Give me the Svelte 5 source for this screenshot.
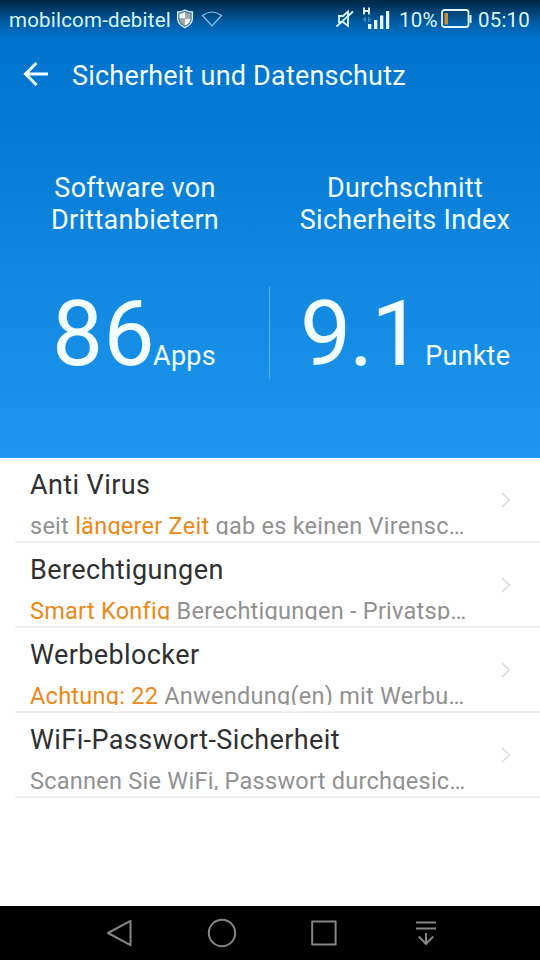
<script>
  const stats = [
    { label: ['Software von', 'Drittanbietern'], value: '86', unit: 'Apps', side: 'left' },
    { label: ['Durchschnitt', 'Sicherheits Index'], value: '9.1', unit: 'Punkte', side: 'right' }
  ];
  const items = [
    { title: 'Anti Virus', before: 'seit ', accent: 'längerer Zeit', after: ' gab es keinen Virensc…' },
    { title: 'Berechtigungen', before: '', accent: 'Smart Konfig', after: ' Berechtigungen - Privatsp…' },
    { title: 'Werbeblocker', before: '', accent: 'Achtung: 22', after: ' Anwendung(en) mit Werbu…' },
    { title: 'WiFi-Passwort-Sicherheit', before: '', accent: '', after: 'Scannen Sie WiFi, Passwort durchgesic…' }
  ];
</script>

<div class="screen">
  <header class="hero">
    <div class="status">
      <span class="carrier">mobilcom-debitel</span>
      <svg class="shield" width="18" height="20" viewBox="0 0 18 20">
        <path d="M9 1 Q12.5 3 16.4 3 V10 Q16 15.5 9 18.6 Q2 15.5 1.6 10 V3 Q5.5 3 9 1Z" fill="#527f9e" stroke="#d5f2fa" stroke-width="1.3" />
        <path d="M9 3 V9.5 H3.5 V4.8 Q7 4.5 9 3Z M9 9.5 H14.5 Q14.3 14 9 16.6Z" fill="#f2fbfb" />
        <path d="M9 3 Q11 4.5 14.5 4.8 V9.5 H9Z M9 9.5 V16.6 Q3.7 14 3.5 9.5Z" fill="#a5a6a0" />
      </svg>
      <svg class="wifi" width="22" height="18" viewBox="0 0 22 18">
        <path d="M1.5 5.5 Q11 -1.5 20.5 5.5 L11 15.8Z" fill="none" stroke="#8ac9f1" stroke-width="1.2" stroke-linejoin="round" />
      </svg>
      <span class="spacer"></span>
      <svg class="mute" width="20" height="22" viewBox="0 0 20 22">
        <path d="M4 8 H8 L13 3.5 V18 L8 14 H4Z" fill="none" stroke="#d9f5ff" stroke-width="1.8" />
        <path d="M1.5 18.5 L18 3.5" stroke="#d9f5ff" stroke-width="1.8" />
      </svg>
      <svg class="signal" width="28" height="24" viewBox="0 0 28 24">
        <path d="M2 0.5 V7.5 M7 0.5 V7.5 M2 4 H7" stroke="#e4f9ff" stroke-width="1.8" fill="none" />
        <path d="M4 9.5 V15.5 L0.5 12.5Z M6 9.5 V15.5 L9.5 12.5Z" fill="#3988b8" />
        <path d="M6 17 H9.3 V22 H6Z M12 13 H15.3 V22 H12Z M18 8.500 H21.3 V22 H18Z M24 4 H27.2 V22 H24Z" fill="#e4f9ff" />
      </svg>
      <span class="percent">10%</span>
      <svg class="battery" width="31" height="20" viewBox="0 0 31 20">
        <rect x="1" y="1" width="26.5" height="17" rx="2.5" fill="none" stroke="#e1f7fb" stroke-width="1.8" />
        <path d="M28.5 6 H30.5 V14 H28.5Z" fill="#e1f7fb" />
        <path d="M3.5 4 H7 V15.5 H3.5Z" fill="#d58a26" />
      </svg>
      <span class="clock">05:10</span>
    </div>

    <div class="toolbar">
      <svg width="26" height="26" viewBox="0 0 26 26">
        <path d="M25 13 H3 M13.5 2 L2.5 13 L13.5 24" fill="none" stroke="#f5ffff" stroke-width="3" />
      </svg>
      <h1>Sicherheit und Datenschutz</h1>
    </div>

    <div class="stats">
      {#each stats as stat}
        <section class={stat.side}>
          <p class="label">{stat.label[0]}<br />{stat.label[1]}</p>
          <div class="reading">
            <span class="value">{stat.value}</span><span class="unit">{stat.unit}</span>
          </div>
        </section>
      {/each}
      <i class="divider"></i>
    </div>
  </header>

  <main>
    {#each items as item}
      <article>
        <div class="copy">
          <h2>{item.title}</h2>
          <p>{item.before}<em>{item.accent}</em>{item.after}</p>
        </div>
        <svg width="12" height="18" viewBox="0 0 12 18">
          <path d="M2 2 L9.3 9 L2 16" fill="none" stroke="#dcdcdc" stroke-width="1.7" />
        </svg>
      </article>
    {/each}
  </main>

  <nav>
    <svg width="30" height="30" viewBox="0 0 30 30"><path d="M25.5 2.8 V27.2 L3 15Z" /></svg>
    <svg width="30" height="30" viewBox="0 0 30 30"><circle cx="15" cy="15" r="13.2" /></svg>
    <svg width="30" height="30" viewBox="0 0 30 30"><rect x="3.2" y="3.6" width="23.4" height="23" /></svg>
    <svg width="30" height="30" viewBox="0 0 30 30"><path d="M5 4.5 H25 M5 10.5 H25 M15 15 V26 M7.8 18.5 L15 26 L22.2 18.5" /></svg>
  </nav>
</div>

<style>
  :global(body) { margin: 0; }
  .screen {
    width: 540px;
    height: 960px;
    display: flex;
    flex-direction: column;
    background: #fefefe;
    font-family: Roboto, "Noto Sans", sans-serif;
    overflow: hidden;
  }
  h1, h2, p { margin: 0; font-weight: 400; }
  svg { display: block; flex: none; }
  .hero {
    height: 458px;
    flex: none;
    color: #f2feff;
    background:
      linear-gradient(rgba(0, 20, 35, 0.8), rgba(0, 20, 35, 0.55) 10px, rgba(0, 20, 35, 0.2) 24px, rgba(0, 20, 35, 0) 40px),
      linear-gradient(#0070c8, #0478d2 100px, #1f97ee);
  }
  .status {
    height: 38px;
    display: flex;
    align-items: center;
    padding: 0 9px;
    font-size: 20.5px;
    letter-spacing: 0.2px;
    color: #d9f6ff;
    white-space: nowrap;
  }
  .status span { padding-top: 2px; }
  .carrier { width: 167px; }
  .shield { margin-top: -1px; }
  .wifi { margin-left: 7px; }
  .spacer { flex: 1; }
  .signal { margin: -1px 0 0 7px; }
  .percent { width: 38px; margin-left: 9px; }
  .battery { margin-left: 4px; }
  .clock { width: 53px; margin-left: 6px; }
  .toolbar {
    height: 72px;
    display: flex;
    align-items: center;
    padding-left: 23px;
    gap: 23px;
  }
  h1 { font-size: 27px; letter-spacing: 0.2px; padding-top: 3px; white-space: nowrap; }
  .stats { display: flex; position: relative; padding-top: 62px; }
  section { width: 270px; display: flex; flex-direction: column; align-items: center; }
  .label { font-size: 27px; line-height: 32px; letter-spacing: 0.3px; text-align: center; white-space: nowrap; }
  .reading { width: 100%; height: 120px; margin-top: 38px; display: flex; align-items: baseline; box-sizing: border-box; }
  .value { font-size: 91px; line-height: 120px; letter-spacing: 0.4px; }
  .unit { font-size: 27px; letter-spacing: 0.2px; }
  .left .reading { padding-left: 52px; }
  .left .unit { margin-left: -2px; }
  .right .reading { padding-left: 30px; }
  .right .value { letter-spacing: -2px; }
  .right .unit { margin-left: 5px; }
  .divider { position: absolute; left: 269px; top: 177px; width: 1px; height: 92px; background: #5eb1ef; }
  main { flex: 1; }
  article {
    height: 85px;
    box-sizing: border-box;
    margin-left: 15px;
    padding: 0 28px 0 15px;
    border-bottom: 2px solid #f0f0f0;
    display: flex;
    align-items: center;
    justify-content: space-between;
  }
  .copy { align-self: flex-start; white-space: nowrap; }
  h2 { font-size: 27px; line-height: 32px; letter-spacing: 0.4px; padding-top: 11px; color: #303030; }
  article p { height: 24px; margin-top: 10px; line-height: 31px; font-size: 23.5px; letter-spacing: 0.26px; color: #919191; overflow: hidden; }
  em { font-style: normal; color: #ec8916; }
  nav {
    height: 54px;
    flex: none;
    background: #000;
    display: flex;
    align-items: center;
    justify-content: center;
    gap: 72px;
    padding-left: 6px;
  }
  nav svg { fill: none; stroke: #858585; stroke-width: 2; stroke-linejoin: round; }
</style>
